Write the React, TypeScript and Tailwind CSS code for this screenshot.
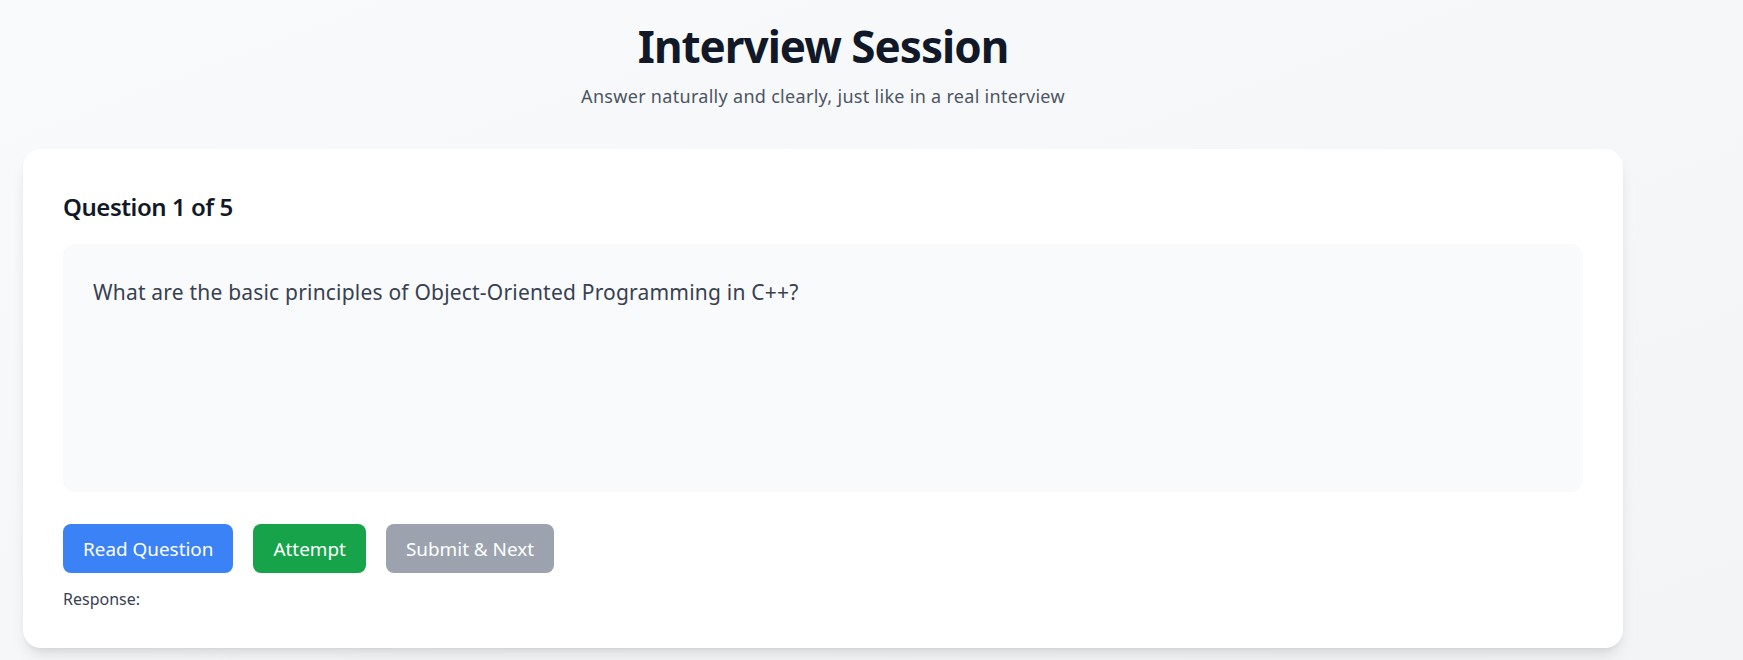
import React from "react";

export default function App() {
  return (
    <div className="min-h-screen bg-linear-to-br from-[#f9fafb] to-[#f3f4f6] font-['Noto_Sans',sans-serif]">
      <div className="px-[23px] pt-[22px]">
        <div className="w-[1600px]">
          <div className="text-center">
            <h1 className="text-[44px] leading-[48px] font-bold tracking-[-1px] text-[#111827]">Interview Session</h1>
            <p className="mt-3 text-lg tracking-[0.3px] text-[#4b5563]">Answer naturally and clearly, just like in a real interview</p>
          </div>
          <div className="mt-[39px] rounded-[18px] bg-white px-10 pt-[42px] pb-[37px] shadow-[0_10px_15px_-3px_rgba(0,0,0,0.1),0_4px_6px_-4px_rgba(0,0,0,0.1)]">
            <h2 className="text-2xl font-semibold tracking-[-0.45px] text-[#111827]">Question 1 of 5</h2>
            <div className="mt-[21px] min-h-62 rounded-xl bg-[#f9fafb] px-[30px] pt-[34px] pb-8">
              <p className="text-[21px] leading-7 tracking-[0.2px] text-[#374151]">What are the basic principles of Object-Oriented Programming in C++?</p>
            </div>
            <div className="mt-8 flex gap-5">
              <button className="rounded-lg bg-[#3b82f6] px-5 py-[10.5px] text-[18.9px] leading-7 text-white">Read Question</button>
              <button className="rounded-lg bg-[#16a34a] px-5 py-[10.5px] text-[18.9px] leading-7 text-white">Attempt</button>
              <button className="rounded-lg bg-[#9ca3af] px-5 py-[10.5px] text-[18.9px] leading-7 text-white">Submit &amp; Next</button>
            </div>
            <p className="mt-[14px] text-base text-[#374151]">Response:</p>
          </div>
        </div>
      </div>
    </div>
  );
}
